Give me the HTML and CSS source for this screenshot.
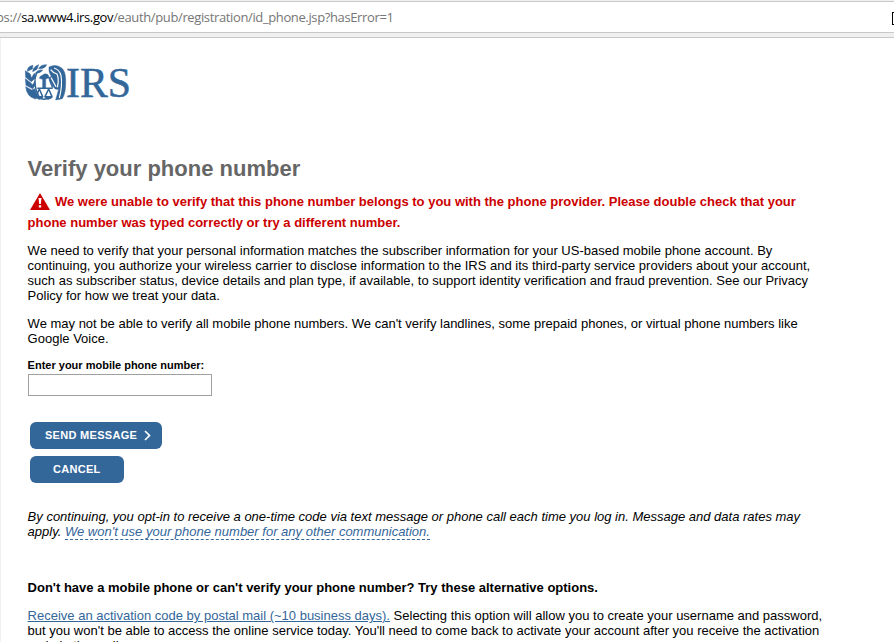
FILE: index.html
```html
<!DOCTYPE html>
<html lang="en">
<head>
<meta charset="utf-8">
<title>Verify your phone number</title>
<link rel="stylesheet" href="styles.css">
</head>
<body>
<header class="browser-bar">
  <div class="address"><span class="url">ps://<b>sa.www4.irs.gov</b>/eauth/pub/registration/id_phone.jsp?hasError=1</span><i class="reader"></i></div>
</header>
<main class="page">
  <svg class="logo" width="112" height="40" viewBox="0 0 112 40" role="img" aria-label="IRS">
    <g transform="scale(.33333) translate(-72 -39)">
      <g fill="#336699" stroke="#336699" stroke-width="1.5">
        <path d="M76 62L91 72L94 84L103 70L107 74L104 86L94 95L77 82ZM76 86L93 99L97 105L105 94L107 104L98 116L78 106ZM77 110L95 120L104 116L114 140L106 147Q80 140 77 110Z"/>
        <path d="M82 64Q81 50 99 46L97 57ZM98 65Q98 51 116 44L111 58ZM116 56Q121 44 140 44Q135 57 116 56ZM106 70Q113 58 128 60Q122 70 106 70Z"/>
        <path d="M118 85Q120 77 127 76Q134 68 144 74L148 83L137 87V116H128V88Z"/>
        <path d="M147 51Q168 40 186 55Q197 65 197 92Q198 128 187 146L167 150L176 118Q164 120 160 110L146 84L154 79Q145 67 147 51Z"/>
      </g>
      <g fill="none" stroke="#336699" stroke-width="4.5">
        <path d="M110 68Q96 102 117 140M116 142Q130 153 152 142"/>
        <path d="M112 115H158M148 88L158 113"/>
        <path d="M118 117L108 140H128ZM146 117L135 140H156Z" stroke-linejoin="round"/>
        <path d="M108 142H128L118 147ZM135 142H156L145 147Z"/>
      </g>
      <g fill="none" stroke="#fff" stroke-width="3.5">
        <path d="M152 59Q158 68 171 72Q178 88 172 112M162 54Q179 59 183 77Q188 105 178 144"/>
        <path d="M153 83Q159 93 168 110"/>
      </g>
    </g>
    <text class="logo-text" x="42" y="34" textLength="65" lengthAdjust="spacingAndGlyphs">IRS</text>
  </svg>
  <h1>Verify your phone number</h1>
  <p class="error"><svg class="warn" width="20" height="17" viewBox="0 0 20 17"><path fill="#c00" d="M10 0L20 17H0Z"/><path fill="#fff" d="M8.5 5H11.5L10.8 11H9.2ZM8.8 12.3H11.2V14.6H8.8Z"/></svg>We were unable to verify that this phone number belongs to you with the phone provider. Please double check that your<br>phone number was typed correctly or try a different number.</p>
  <p class="need">We need to verify that your personal information matches the subscriber information for your US-based mobile phone account. By<br>continuing, you authorize your wireless carrier to disclose information to the IRS and its third-party service providers about your account,<br>such as subscriber status, device details and plan type, if available, to support identity verification and fraud prevention. See our Privacy<br>Policy for how we treat your data.</p>
  <p class="limits">We may not be able to verify all mobile phone numbers. We can't verify landlines, some prepaid phones, or virtual phone numbers like<br>Google Voice.</p>
  <form class="form">
    <label for="phone">Enter your mobile phone number:</label>
    <input id="phone" type="text">
    <button class="send" type="button"><span>SEND MESSAGE</span><svg width="7" height="11" viewBox="0 0 7 11"><path d="M1 1L5.5 5.5L1 10" fill="none" stroke="#fff" stroke-width="1.7"/></svg></button>
    <button class="cancel" type="button"><span>CANCEL</span></button>
  </form>
  <p class="consent">By continuing, you opt-in to receive a one-time code via text message or phone call each time you log in. Message and data rates may<br>apply. <a class="tip">We won't use your phone number for any other communication.</a></p>
  <h2>Don't have a mobile phone or can't verify your phone number? Try these alternative options.</h2>
  <p class="mail"><a class="link">Receive an activation code by postal mail (~10 business days).</a> Selecting this option will allow you to create your username and password,<br>but you won't be able to access the online service today. You'll need to come back to activate your account after you receive the activation<br>code in the mail.</p>
</main>
</body>
</html>
```
FILE: styles.css
```css
* { box-sizing: border-box; }
html, body { margin: 0; height: 100%; overflow: hidden; }
body {
  display: flex; flex-direction: column;
  background: #fff; color: #000;
  font: 13px/15px "Liberation Sans", Arial, sans-serif;
}
.browser-bar {
  flex: none; height: 38px; padding: 1px 0 4px;
  background: #f0f0f0; border-bottom: 1px solid #c8c8c8;
}
.address {
  display: flex; justify-content: space-between; height: 32px;
  background: #fff; border: solid #c8c8c8; border-width: 1px 0;
  overflow: hidden;
}
.url {
  margin-left: -4px; white-space: nowrap; color: #767676;
  font: 13px/31px "Open Sans", sans-serif; letter-spacing: -.37px;
}
.url b { color: #000; font-weight: 400; }
.reader { width: 2px; height: 13px; margin-top: 10px; border: 1px solid #000; border-right: 0; }
.page {
  flex: 1; min-height: 0; overflow: hidden;
  padding: 25px 0 0 26.6px; border-left: 1px solid #f0f0f0; white-space: nowrap;
}
.page p, h1, h2 { margin: 0; }
.logo { display: block; margin-left: -3.6px; }
.logo-text { font: 42px "Liberation Serif", serif; fill: #369; stroke: #369; stroke-width: .5px; }
h1 { margin-top: 53px; color: #666; font-size: 22px; line-height: 26px; }
.page .error { margin-top: 9px; color: #c00; font-weight: 700; line-height: 21px; }
.warn { margin: 0 5.4px 0 2px; vertical-align: -4px; }
.page .need { margin-top: 10px; }
.page .limits { margin-top: 13px; }
.form { display: flex; flex-direction: column; align-items: flex-start; margin-top: 13px; }
label { font-size: 11px; font-weight: 700; line-height: 13px; }
input { width: 184px; height: 22px; margin: 2px 0 26px .4px; border: 1px solid #a0a0a0; background: #fff; }
button {
  display: flex; align-items: center; height: 27px; margin: 0 0 7px 2.4px; padding: 0 0 0 15px;
  border: 0; border-radius: 6px; background: #369; color: #fff;
  font: 700 11px/27px "Liberation Sans", Arial, sans-serif; letter-spacing: .3px;
}
.send { width: 132px; gap: 7px; }
.cancel { width: 94px; padding-left: 23px; }
.page .consent { margin-top: 19px; font-style: italic; }
.tip { color: #369; border-bottom: 1px dashed #369; }
h2 { margin-top: 41px; font-size: 13px; line-height: 16px; }
.page .mail { margin-top: 12px; }
.link { color: #369; text-decoration: underline; }
```
